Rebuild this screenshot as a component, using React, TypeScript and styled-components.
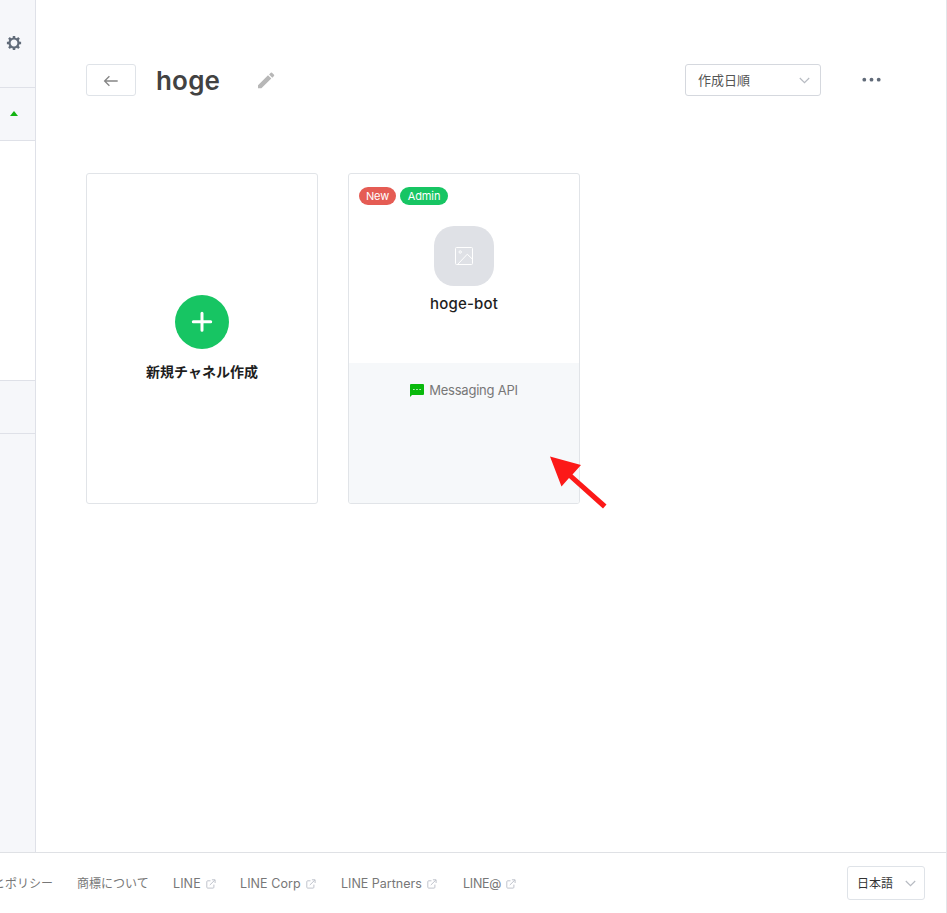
import React from "react";
import styled, { createGlobalStyle } from "styled-components";

const GlobalStyle = createGlobalStyle`
  *, *::before, *::after { box-sizing: border-box; }
  body {
    margin: 0;
    background: #fff;
    overflow: hidden;
    font-family: Inter, "Noto Sans CJK JP", sans-serif;
    -webkit-font-smoothing: antialiased;
  }
  button { font: inherit; padding: 0; }
  svg { display: block; flex: none; }
`;

const Page = styled.div`
  display: flex;
  flex-direction: column;
  width: 947px;
  height: 913px;
  overflow: hidden;
  border-right: 1px solid #e3e5e9;
`;

const Body = styled.div`
  display: flex;
  height: 852px;
`;

const Sidebar = styled.aside`
  width: 36px;
  flex: none;
  display: flex;
  flex-direction: column;
  background: #f6f7fa;
  border-right: 1px solid #dfe1e8;
`;

const SideSection = styled.div<{ $height: number; $white?: boolean }>`
  height: ${(p) => p.$height}px;
  flex: none;
  display: flex;
  justify-content: center;
  align-items: center;
  padding: 0 7px 2px 0;
  background: ${(p) => (p.$white ? "#fff" : "transparent")};
  border-bottom: 1px solid #dfe1e8;
`;

const Main = styled.main`
  flex: 1;
  padding: 64px 65px 0 50px;
`;

const Header = styled.header`
  display: flex;
  align-items: center;
  height: 32px;
`;

const BackButton = styled.button`
  width: 50px;
  height: 32px;
  display: grid;
  place-items: center;
  padding-top: 2px;
  background: #fff;
  border: 1px solid #dfe3e8;
  border-radius: 3px;
`;

const Title = styled.h1`
  margin: 0 0 0 20px;
  padding-top: 2px;
  width: 101px;
  font-size: 26px;
  line-height: 32px;
  font-weight: 600;
  letter-spacing: 0.2px;
  color: #424242;
`;

const Select = styled.button<{ $width: number; $height: number; $color: string; $size: number; $pad: string; $border: string }>`
  width: ${(p) => p.$width}px;
  height: ${(p) => p.$height}px;
  display: flex;
  align-items: center;
  justify-content: space-between;
  padding: ${(p) => p.$pad};
  font-size: ${(p) => p.$size}px;
  line-height: 20px;
  color: ${(p) => p.$color};
  background: #fff;
  border: 1px solid ${(p) => p.$border};
  border-radius: 3px;
`;

const HeaderRight = styled.div`
  margin-left: auto;
  display: flex;
  align-items: center;
  gap: 41px;
`;

const Cards = styled.div`
  display: flex;
  gap: 30px;
  margin-top: 77px;
`;

const Card = styled.article`
  width: 232px;
  height: 331px;
  display: flex;
  flex-direction: column;
  align-items: center;
  border: 1px solid #e1e4e8;
  border-radius: 3px;
  overflow: hidden;
`;

const AddCircle = styled.div`
  width: 54px;
  height: 54px;
  margin-top: 121px;
  display: grid;
  place-items: center;
  border-radius: 50%;
  background: #17c563;
`;

const AddLabel = styled.div`
  margin-top: 13px;
  font-size: 14px;
  line-height: 20px;
  font-weight: 700;
  color: #1e1e1e;
`;

const CardTop = styled.div`
  height: 189px;
  width: 100%;
  display: flex;
  flex-direction: column;
  align-items: center;
`;

const Badges = styled.div`
  align-self: flex-start;
  display: flex;
  gap: 4px;
  padding: 13px 0 0 10px;
`;

const Badge = styled.span<{ $color: string; $width: number }>`
  width: ${(p) => p.$width}px;
  height: 18px;
  border-radius: 9px;
  text-align: center;
  font-size: 11px;
  line-height: 18px;
  letter-spacing: -0.1px;
  color: #fff;
  background: ${(p) => p.$color};
`;

const Avatar = styled.div`
  width: 60px;
  height: 60px;
  margin-top: 21px;
  border-radius: 20px;
  display: grid;
  place-items: center;
  background: #dfe1e6;
`;

const BotName = styled.div`
  margin-top: 8px;
  font-size: 15px;
  line-height: 20px;
  font-weight: 500;
  letter-spacing: 0.2px;
  color: #1e1e1e;
`;

const CardBottom = styled.div`
  flex: 1;
  width: 100%;
  display: flex;
  justify-content: center;
  align-items: flex-start;
  gap: 5px;
  padding-top: 17px;
  background: #f6f8fa;
  font-size: 13px;
  line-height: 20px;
  letter-spacing: -0.23px;
  color: #777;
  svg { margin-top: 4px; }
`;

const Footer = styled.footer`
  height: 61px;
  flex: none;
  display: flex;
  justify-content: space-between;
  align-items: center;
  border-top: 1px solid #dfe1e5;
  padding-right: 21px;
`;

const Links = styled.nav`
  display: flex;
  margin-left: -7px;
`;

const FootLink = styled.a<{ $width: number; $spacing?: number; $external?: boolean }>`
  width: ${(p) => p.$width}px;
  display: flex;
  align-items: center;
  gap: 5px;
  padding-top: 1px;
  white-space: nowrap;
  font-size: ${(p) => (p.$external ? 12.5 : 12)}px;
  line-height: 20px;
  letter-spacing: ${(p) => p.$spacing ?? 0}px;
  color: #777;
`;

const Pointer = styled.svg`
  position: absolute;
  left: 546px;
  top: 452px;
`;

const Gear = () => (
  <svg width="16" height="16" viewBox="-8 -8 16 16" fill="none">
    <circle r="4.5" stroke="#616b79" strokeWidth="2.2" />
    <g stroke="#616b79" strokeWidth="2.5">
      {[0, 45, 90, 135].map((a) => (
        <path key={a} d="M0-7.1V-4.8M0 4.8V7.1" transform={`rotate(${a})`} />
      ))}
    </g>
  </svg>
);

const Chevron = () => (
  <svg width="11" height="7" viewBox="0 0 11 7" fill="none" stroke="#b7bbc2" strokeWidth="1.2">
    <path d="M.8 1 5.5 5.7 10.2 1" />
  </svg>
);

const External = () => (
  <svg width="10" height="10" viewBox="0 0 10 10" fill="none" stroke="#bfc3cc" strokeWidth="1">
    <path d="M4.5 1.8H1.7Q.8 1.8.8 2.7V8.2Q.8 9.1 1.7 9.1H7Q7.9 9.1 7.9 8.2V5.6M3.8 6 8.9 1M5.9.8H9.1V4" />
  </svg>
);

const links = [
  { text: "とポリシー", width: 84 },
  { text: "商標について", width: 96 },
  { text: "LINE", width: 67, external: true, spacing: 0.1 },
  { text: "LINE Corp", width: 101, external: true, spacing: 0.07 },
  { text: "LINE Partners", width: 122, external: true },
  { text: "LINE@", width: 56, external: true, spacing: -0.25 },
];

export default function App() {
  return (
    <>
      <GlobalStyle />
      <Page>
        <Body>
          <Sidebar>
            <SideSection $height={88}><Gear /></SideSection>
            <SideSection $height={53}>
              <svg width="8" height="5" viewBox="0 0 8 5"><path d="M4 0 8 5H0Z" fill="#12b312" /></svg>
            </SideSection>
            <SideSection $height={240} $white />
            <SideSection $height={53} />
          </Sidebar>
          <Main>
            <Header>
              <BackButton aria-label="Back">
                <svg width="16" height="12" viewBox="0 0 16 12" fill="none" stroke="#858585" strokeWidth="1.3">
                  <path d="M14.7 6H1.6M6.4 1.2 1.6 6 6.4 10.8" />
                </svg>
              </BackButton>
              <Title>hoge</Title>
              <svg width="18" height="18" viewBox="0 0 18 18" fill="#b7b7b7">
                <path d="M1 14.2 11 4.3 14.3 7.6 4.4 17.3H1ZM12.1 3.4 13.8 1.7Q14.4 1.2 15 1.7L17 3.8Q17.5 4.4 17 5L15.3 6.7Z" />
              </svg>
              <HeaderRight>
                <Select $width={136} $height={32} $color="#555" $size={13} $pad="0 10px 0 12px" $border="#d5d8de">
                  作成日順<Chevron />
                </Select>
                <svg width="19" height="6" viewBox="0 0 19 6" fill="#616b79">
                  <circle cx="2.3" cy="2.7" r="1.9" /><circle cx="9.5" cy="2.7" r="1.9" /><circle cx="16.7" cy="2.7" r="1.9" />
                </svg>
              </HeaderRight>
            </Header>
            <Cards>
              <Card>
                <AddCircle>
                  <svg width="22" height="22" viewBox="0 0 22 22" stroke="#fff" strokeWidth="3" strokeLinecap="round">
                    <path d="M11 2.3V19.2M2.3 10.7H19.7" />
                  </svg>
                </AddCircle>
                <AddLabel>新規チャネル作成</AddLabel>
              </Card>
              <Card>
                <CardTop>
                  <Badges>
                    <Badge $color="#e55c54" $width={37}>New</Badge>
                    <Badge $color="#17c563" $width={48}>Admin</Badge>
                  </Badges>
                  <Avatar>
                    <svg width="18" height="18" viewBox="0 0 18 18" fill="none" stroke="#fff">
                      <rect x=".5" y=".5" width="17" height="17" rx="1" />
                      <circle cx="5.2" cy="5" r="1.2" />
                      <path d="M2.8 17.2 12.3 7.2 17.3 12" />
                    </svg>
                  </Avatar>
                  <BotName>hoge-bot</BotName>
                </CardTop>
                <CardBottom>
                  <svg width="14" height="13" viewBox="0 0 14 13">
                    <path d="M1 0H13Q14 0 14 1V10Q14 11 13 11H2L0 13V1Q0 0 1 0Z" fill="#09b90c" />
                    <path d="M3.3 5.5H4.5M6.4 5.5H7.6M9.5 5.5H10.7" stroke="#fff" strokeWidth="1.2" />
                  </svg>
                  Messaging API
                </CardBottom>
              </Card>
            </Cards>
          </Main>
        </Body>
        <Footer>
          <Links>
            {links.map((l) => (
              <FootLink key={l.text} $width={l.width} $spacing={l.spacing} $external={l.external}>
                {l.text}{l.external && <External />}
              </FootLink>
            ))}
          </Links>
          <Select $width={78} $height={34} $color="#333" $size={12} $pad="1px 8px 0 9px" $border="#dfe3e8">
            日本語<Chevron />
          </Select>
        </Footer>
      </Page>
      <Pointer width="62" height="58" viewBox="0 0 62 58">
        <path d="M4 4.5 35 13 26.5 22.5 60.5 52.5 57 56.5 23 26 15.5 34.5Z" fill="#fc1918" />
      </Pointer>
    </>
  );
}
